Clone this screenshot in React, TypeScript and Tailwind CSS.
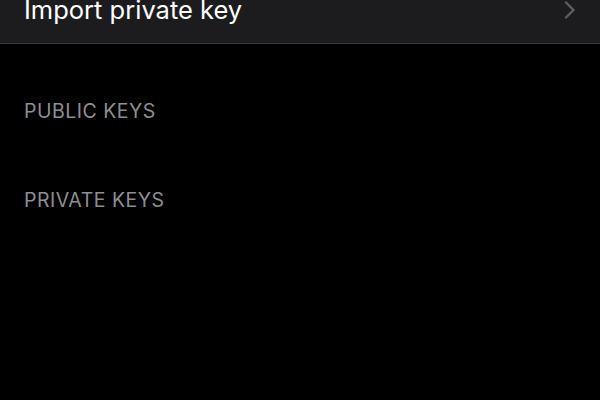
export default function App() {
  return (
    <div className="w-[600px] h-[400px] bg-black overflow-hidden" style={{ fontFamily: "Inter, 'Noto Sans', sans-serif" }}>
      {/* Import row (scrolled partly off the top) */}
      <div className="-mt-[22px] h-[66px] bg-[#1c1c1e] border-b border-[#38383a] flex items-center justify-between pl-6 pr-6">
        <span className="text-[25.5px] text-white -mt-[1px]">Import private key</span>
        <svg width="12" height="18" viewBox="0 0 12 18" fill="none" className="-mt-[2px]">
          <path d="M2 1.5 L9.5 9 L2 16.5" stroke="#5e5e62" strokeWidth="2.4" strokeLinecap="round" strokeLinejoin="round" />
        </svg>
      </div>

      <div className="pl-6">
        <div className="pt-[53px] text-[19.5px] leading-[28.5px] text-[#8e8e93] tracking-[0.5px]">PUBLIC KEYS</div>
        <div className="pt-[60px] text-[19.5px] leading-[28.5px] text-[#8e8e93] tracking-[0.5px]">PRIVATE KEYS</div>
      </div>
    </div>
  );
}
